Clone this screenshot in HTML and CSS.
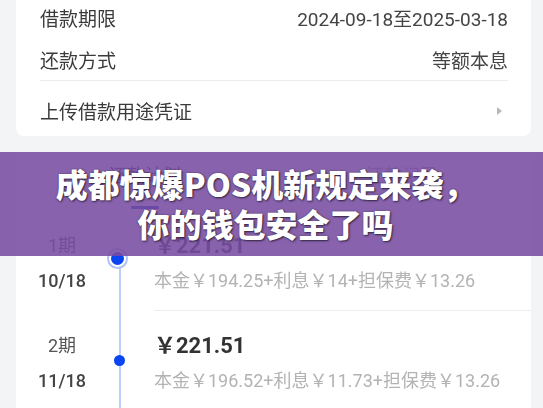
FILE: index.html
```html
<!DOCTYPE html>
<html lang="zh-CN">
<head>
    <meta charset="UTF-8">
    <meta name="viewport" content="width=device-width, initial-scale=1.0">
    <title>成都惊爆POS机新规定来袭</title>
    <link rel="stylesheet" href="styles.css">
</head>
<body>
    <div class="app">
        <!-- 借款信息 -->
        <div class="card info-card">
            <div class="info-row">
                <span class="label">借款期限</span>
                <span class="value">2024-09-18至2025-03-18</span>
            </div>
            <div class="info-row">
                <span class="label">还款方式</span>
                <span class="value">等额本息</span>
            </div>
            <div class="info-row link-row">
                <span class="label">上传借款用途凭证</span>
                <span class="arrow"></span>
            </div>
        </div>

        <!-- 还款计划 -->
        <div class="card plan-card">
            <div class="tabs">
                <div class="tab active">还款计划</div>
                <div class="tab">还款记录</div>
            </div>

            <div class="plan-row first">
                <div class="period">
                    <div>1期</div>
                    <div class="date">10/18</div>
                </div>
                <div class="axis"><span class="dot current"></span></div>
                <div class="detail">
                    <div class="amount">￥221.51</div>
                    <div class="desc">本金￥194.25+利息￥14+担保费￥13.26</div>
                </div>
            </div>

            <div class="plan-row">
                <div class="period">
                    <div>2期</div>
                    <div class="date">11/18</div>
                </div>
                <div class="axis"><span class="dot"></span></div>
                <div class="detail">
                    <div class="amount">￥221.51</div>
                    <div class="desc">本金￥196.52+利息￥11.73+担保费￥13.26</div>
                </div>
            </div>
        </div>
    </div>

    <!-- 标题横幅 -->
    <div class="banner">
        <h1>成都惊爆POS机新规定来袭，<br>你的钱包安全了吗</h1>
    </div>
</body>
</html>
```

FILE: styles.css
```css
body {
    margin: 0;
    font-family: "Roboto", "Noto Sans CJK SC", sans-serif;
    background-color: #f3f4f6;
    color: #333;
    height: 408px;
    overflow: hidden;
}

.app {
    filter: blur(0.4px);
}

.card {
    background-color: #fff;
    border-radius: 8px;
    margin: 0 12px 0 16px;
}

/* 借款信息 */
.info-card {
    margin-top: -4px;
    padding: 0 23px 0 24px;
    border-radius: 0 0 8px 8px;
}

.info-row {
    display: flex;
    justify-content: space-between;
    align-items: center;
    height: 42px;
    font-size: 19px;
}

.info-row .label {
    color: #3a3a3a;
}

.info-row .value {
    color: #444;
}

.link-row {
    height: 56px;
    padding: 4px 0 0;
    box-sizing: border-box;
    border-top: 1px solid #ececec;
}

.arrow {
    width: 0;
    height: 0;
    margin-right: 6px;
    border-top: 4px solid transparent;
    border-bottom: 4px solid transparent;
    border-left: 5px solid #b8b8b8;
}

/* 还款计划 */
.plan-card {
    margin-top: 16px;
    border-radius: 8px 8px 0 0;
}

.tabs {
    display: flex;
    height: 59px;
}

.tab {
    flex: 1;
    display: flex;
    flex-direction: column;
    align-items: center;
    padding-top: 12px;
    line-height: 24px;
    font-size: 18px;
    color: #999;
}

.tab.active {
    color: #333;
}

.tab.active::after {
    content: "";
    width: 28px;
    height: 3px;
    margin-top: 18px;
    border-radius: 2px;
    background-color: #1d33c8;
}

.plan-row {
    display: flex;
    height: 100px;
}

.period {
    width: 92px;
    padding-top: 17px;
    text-align: center;
    line-height: 35px;
    font-size: 18px;
    color: #555;
}

.period .date {
    color: #444;
    font-weight: 500;
}

.axis {
    width: 23px;
    position: relative;
}

.axis::before {
    content: "";
    position: absolute;
    left: 10.5px;
    top: 0;
    bottom: 0;
    width: 2px;
    background-color: #bccff7;
}

.plan-row.first .axis::before {
    top: 50px;
}

.dot {
    position: absolute;
    left: 6px;
    top: 44px;
    width: 11px;
    height: 11px;
    border-radius: 50%;
    background-color: #0a45f2;
}

.dot.current {
    left: 1px;
    top: 39px;
    width: 13px;
    height: 13px;
    border: 2px solid #fff;
    box-shadow: 0 0 0 2px #aec3f4;
}

.detail {
    flex: 1;
    margin-left: 23px;
    padding-top: 17px;
    line-height: 35px;
    border-bottom: 1px solid #eee;
}

.amount {
    font-size: 22px;
    font-weight: bold;
    color: #333;
}

.desc {
    font-size: 18px;
    color: #b3b3b3;
}

/* 标题横幅 */
.banner {
    position: absolute;
    top: 152px;
    left: 0;
    right: 0;
    height: 104px;
    background-color: rgba(120, 76, 162, 0.88);
}

.banner h1 {
    margin: 0;
    padding: 11px 12px 0 0;
    text-align: center;
    font-family: "Noto Sans CJK SC", sans-serif;
    font-size: 32px;
    font-weight: 900;
    line-height: 40px;
    color: #fff;
    text-shadow: 1px 1px 2px rgba(0, 0, 0, 0.6), 0 0 2px rgba(0, 0, 0, 0.35);
}
```
